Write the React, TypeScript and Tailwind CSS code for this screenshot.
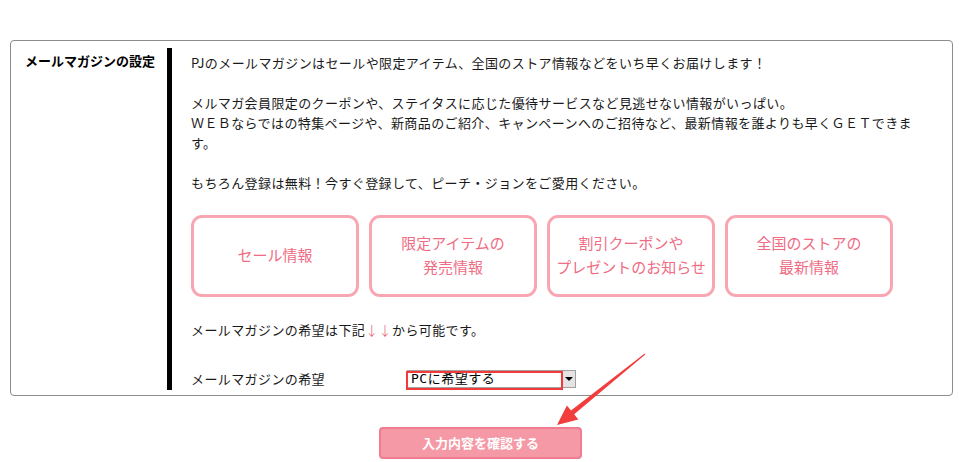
const features = [
  ['セール情報'],
  ['限定アイテムの', '発売情報'],
  ['割引クーポンや', 'プレゼントのお知らせ'],
  ['全国のストアの', '最新情報'],
];

export default function App() {
  return (
    <div
      className="relative w-[959px] h-[462px] overflow-hidden bg-white pt-[40px] text-[13px] text-[#1a1a1a]"
      style={{ fontFamily: '"Noto Sans CJK JP", "Noto Sans", sans-serif' }}
    >
      <div className="ml-[10px] w-[943px] flex border border-[#8c8c8c] rounded-[4px]">
        <div className="w-[156px] shrink-0 pl-[14px] pt-[10px] font-bold leading-[20px] text-black">
          メールマガジンの設定
        </div>
        <div className="flex-1 mt-[7px] mb-[5px] border-l-[5px] border-black pl-[19px] pt-[5px] tracking-[0.4px] leading-[20px]">
          <p>PJのメールマガジンはセールや限定アイテム、全国のストア情報などをいち早くお届けします！</p>
          <p className="mt-[20px] w-[735px]">
            メルマガ会員限定のクーポンや、ステイタスに応じた優待サービスなど見逃せない情報がいっぱい。<br />
            ＷＥＢならではの特集ページや、新商品のご紹介、キャンペーンへのご招待など、最新情報を誰よりも早くＧＥＴできます。
          </p>
          <p className="mt-[20px]">もちろん登録は無料！今すぐ登録して、ピーチ・ジョンをご愛用ください。</p>

          <div className="mt-[22px] flex gap-[10px] tracking-normal">
            {features.map((lines) => (
              <div
                key={lines.join('')}
                className="w-[168px] h-[82px] flex flex-col items-center justify-center rounded-[11px] border-[3px] border-[#f8a6b2] pb-[2px] text-[15px] leading-[24px] text-[#ef6c84]"
              >
                {lines.map((l) => (
                  <span key={l}>{l}</span>
                ))}
              </div>
            ))}
          </div>

          <p className="mt-[23px]">
            メールマガジンの希望は下記<span className="font-light text-[#e4506a]">↓↓</span>から可能です。
          </p>

          <div className="mt-[28px] flex items-center h-[22px]">
            <span className="w-[216px] shrink-0">メールマガジンの希望</span>
            <div className="relative flex h-[18px] w-[169px] border border-[#a0a0a0] bg-white">
              <span
                className="flex-1 pl-[3px] text-[13px] leading-[16px] tracking-[0.5px] text-black"
                style={{ fontFamily: '"DejaVu Sans Mono", "Noto Sans CJK JP", monospace' }}
              >
                PCに希望する
              </span>
              <span className="w-[14px] flex items-center justify-center bg-[#e4e4e4] border-l border-[#9a9a9a]">
                <span className="w-0 h-0 border-l-[4px] border-r-[4px] border-t-[4px] border-l-transparent border-r-transparent border-t-black" />
              </span>
              <span className="absolute left-[-2px] top-[0px] w-[157px] h-[19px] border-2 border-[#f23a3a]" />
            </div>
          </div>
        </div>
      </div>

      <div className="mt-[31px] flex justify-center">
        <button className="ml-[2px] w-[203px] h-[32px] rounded-[4px] border-2 border-[#f07c90] bg-[#f599a6] text-[13px] font-bold text-white">
          入力内容を確認する
        </button>
      </div>

      <svg className="absolute left-0 top-0 pointer-events-none" width="959" height="462" viewBox="0 0 959 462">
        <polygon
          points="557,425 566.9,405.4 571,410.4 644.7,353.6 645.3,354.4 574.2,414.3 578.3,419.4"
          fill="#f23d3d"
        />
      </svg>
    </div>
  );
}
